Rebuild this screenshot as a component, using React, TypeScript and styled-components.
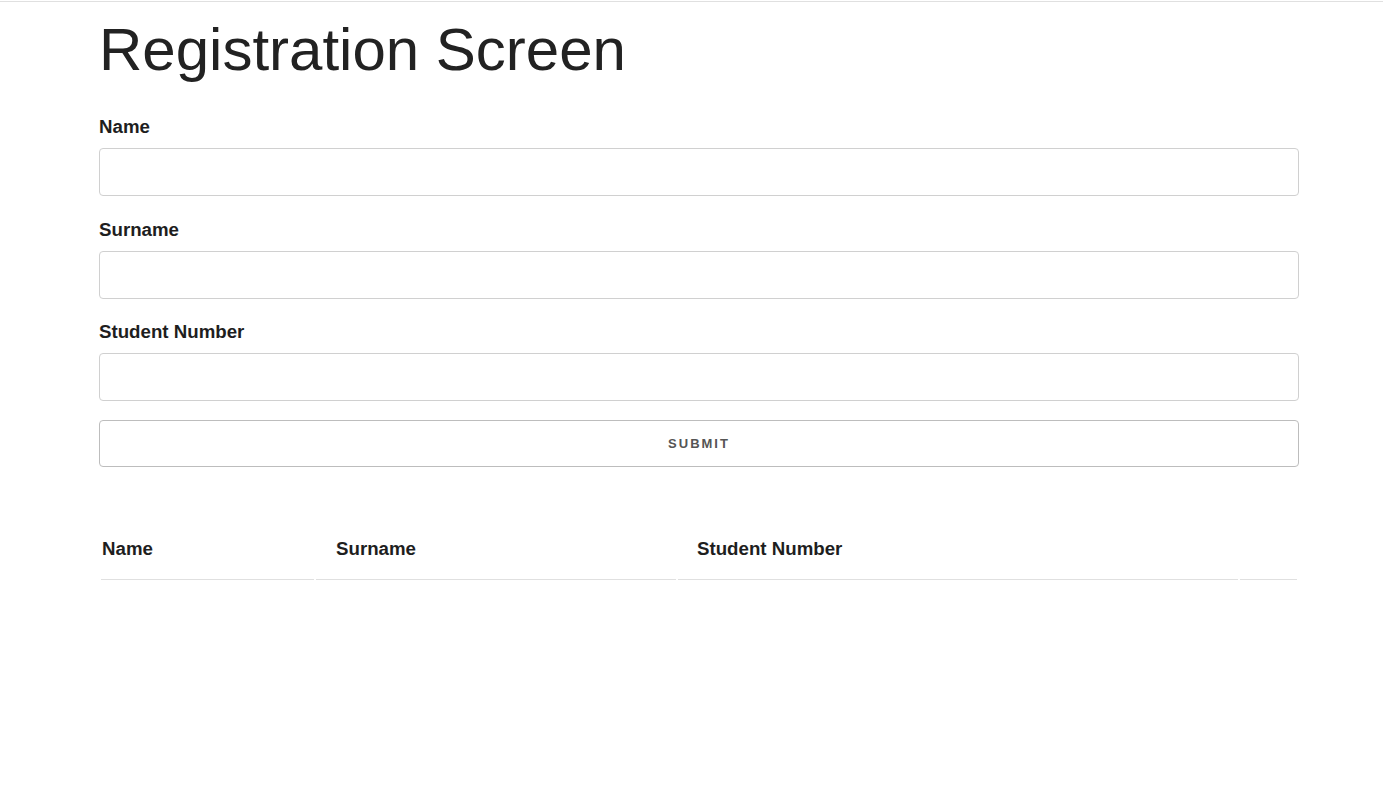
import React from "react";
import styled, { createGlobalStyle } from "styled-components";

const GlobalStyle = createGlobalStyle`
  html, body {
    margin: 0;
    padding: 0;
    background: #ffffff;
    font-family: "Liberation Sans", Arial, Helvetica, sans-serif;
    color: #222222;
  }
  * { box-sizing: border-box; }
`;

const TopRule = styled.div`
  height: 1px;
  margin-top: 1px;
  background: #e0e0e0;
`;

const Page = styled.main`
  padding-left: 99px;
`;

const Container = styled.div`
  width: 1200px;
  display: flex;
  flex-direction: column;
`;

const Title = styled.h1`
  margin: 13px 0 0;
  font-size: 60px;
  line-height: 69px;
  font-weight: 400;
  color: #222222;
`;

const Form = styled.form`
  display: flex;
  flex-direction: column;
  margin-top: 32px;
`;

const Field = styled.div<{ $last?: boolean }>`
  display: flex;
  flex-direction: column;
  margin-bottom: ${(p) => (p.$last ? "19px" : "22.5px")};
`;

const Label = styled.label`
  font-size: 18.7px;
  line-height: 21px;
  font-weight: 700;
  color: #1e1e1e;
  margin-bottom: 11px;
`;

const Input = styled.input`
  height: 48px;
  width: 100%;
  border: 1px solid #d0d0d0;
  border-radius: 4px;
  padding: 0 12px;
  font-family: inherit;
  font-size: 16px;
  outline: none;
  background: #ffffff;
`;

const SubmitButton = styled.button`
  height: 47px;
  width: 100%;
  border: 1px solid #bdbdbd;
  border-radius: 4px;
  background: #ffffff;
  font-family: inherit;
  font-size: 13px;
  font-weight: 700;
  letter-spacing: 2px;
  color: #555555;
  text-transform: uppercase;
  cursor: pointer;
`;

const Table = styled.table`
  width: 1200px;
  margin-top: 53px;
  border-collapse: separate;
  border-spacing: 2px;
`;

const HeadCell = styled.th<{ $w: number; $pl: number }>`
  width: ${(p) => p.$w}px;
  padding: 16px 0 20px ${(p) => p.$pl}px;
  text-align: left;
  font-size: 18.7px;
  line-height: 21px;
  font-weight: 700;
  color: #1e1e1e;
  border-bottom: 1px solid #e0e0e0;
`;

const columns = [
  { label: "Name", w: 213, pl: 1 },
  { label: "Surname", w: 360, pl: 20 },
  { label: "Student Number", w: 560, pl: 19 },
  { label: "", w: 57, pl: 0 },
];

export default function App() {
  return (
    <>
      <GlobalStyle />
      <TopRule />
      <Page>
        <Container>
          <Title>Registration Screen</Title>
          <Form onSubmit={(e) => e.preventDefault()}>
            <Field>
              <Label htmlFor="name">Name</Label>
              <Input id="name" type="text" />
            </Field>
            <Field>
              <Label htmlFor="surname">Surname</Label>
              <Input id="surname" type="text" />
            </Field>
            <Field $last>
              <Label htmlFor="studentNumber">Student Number</Label>
              <Input id="studentNumber" type="text" />
            </Field>
            <SubmitButton type="submit">Submit</SubmitButton>
          </Form>
          <Table>
            <thead>
              <tr>
                {columns.map((c, i) => (
                  <HeadCell key={i} $w={c.w} $pl={c.pl}>
                    {c.label}
                  </HeadCell>
                ))}
              </tr>
            </thead>
            <tbody />
          </Table>
        </Container>
      </Page>
    </>
  );
}
